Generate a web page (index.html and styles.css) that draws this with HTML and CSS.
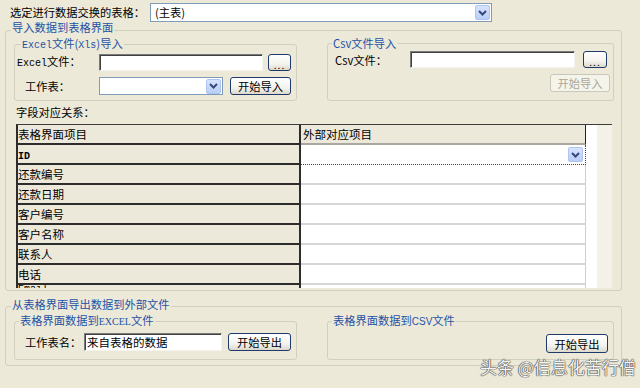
FILE: index.html
```html
<!DOCTYPE html>
<html lang="zh-CN">
<head>
<meta charset="utf-8">
<title>数据交换</title>
<link rel="stylesheet" href="styles.css">
</head>
<body>
<div class="top">
  <span class="toplbl">选定进行数据交换的表格：</span>
  <div class="combo topcombo"><span class="ctext">(主表)</span><span class="dd"><svg width="9" height="6" viewBox="0 0 9 6"><path d="M1 1 L4.5 4.5 L8 1" fill="none" stroke="#34497c" stroke-width="2"/></svg></span></div>
</div>

<fieldset class="grp outer imp">
  <legend>导入数据到表格界面</legend>
  <div class="subs">
    <fieldset class="grp sub iexcel">
      <legend class="lg6"><span class="mono">Excel</span>文件(<span class="mono">Xls</span>)导入</legend>
      <div class="r r1">
        <span class="lbl w82"><span class="mono">Excel</span>文件：</span>
        <div class="tb w164"></div>
        <button class="btn dots">...</button>
      </div>
      <div class="r r2">
        <span class="lbl w74">工作表：</span>
        <div class="combo w124"><span class="dd"><svg width="9" height="6" viewBox="0 0 9 6"><path d="M1 1 L4.5 4.5 L8 1" fill="none" stroke="#34497c" stroke-width="2"/></svg></span></div>
        <button class="btn w61">开始导入</button>
      </div>
    </fieldset>
    <fieldset class="grp sub icsv">
      <legend>Csv文件导入</legend>
      <div class="r c1r">
        <span class="lbl w75">Csv文件：</span>
        <div class="tb w165"></div>
        <button class="btn dots w24">...</button>
      </div>
      <div class="r c2r">
        <button class="btn w60" disabled>开始导入</button>
      </div>
    </fieldset>
  </div>
  <div class="fieldlbl">字段对应关系：</div>
  <div class="grid">
    <div class="tbl">
      <div class="k hd">表格界面项目</div><div class="v hd">外部对应项目</div>
      <div class="k"><b class="mono">ID</b></div><div class="v sel"><span class="dd"><svg width="9" height="6" viewBox="0 0 9 6"><path d="M1 1 L4.5 4.5 L8 1" fill="none" stroke="#34497c" stroke-width="2"/></svg></span></div>
      <div class="k">还款编号</div><div class="v"></div>
      <div class="k">还款日期</div><div class="v"></div>
      <div class="k">客户编号</div><div class="v"></div>
      <div class="k">客户名称</div><div class="v"></div>
      <div class="k">联系人</div><div class="v"></div>
      <div class="k">电话</div><div class="v"></div>
      <div class="k last"><span class="mono">Email</span></div><div class="v"></div>
    </div>
    <div class="fill"></div>
    <div class="sb"></div>
  </div>
</fieldset>

<fieldset class="grp outer exp">
  <legend>从表格界面导出数据到外部文件</legend>
  <div class="subs">
    <fieldset class="grp sub eexcel">
      <legend>表格界面数据到<span class="ser">EXCEL</span>文件</legend>
      <div class="r e1r">
        <span class="lbl w59">工作表名：</span>
        <div class="tb w138 tbtext">来自表格的数据</div>
        <button class="btn w63">开始导出</button>
      </div>
    </fieldset>
    <fieldset class="grp sub ecsv">
      <legend>表格界面数据到<span class="nar">CSV</span>文件</legend>
      <div class="r e2r">
        <button class="btn w62">开始导出</button>
      </div>
    </fieldset>
  </div>
</fieldset>

<div class="wm">头条 @信息化苦行僧</div>
</body>
</html>
```

FILE: styles.css
```css
* { box-sizing: border-box; }
body {
  margin: 0;
  width: 640px;
  height: 388px;
  background: #ECE9D8;
  font-family: "Noto Sans CJK SC", "Noto Sans", sans-serif;
  font-size: 11.25px;
  color: #000;
  position: relative;
  overflow: hidden;
}
.mono { font-family: "Liberation Mono", "Noto Sans CJK SC", monospace; font-size: 10px; }
.ser { font-family: "Liberation Serif", serif; font-size: 10px; }
.nar { font-family: "Liberation Sans Narrow", "Liberation Sans", sans-serif; font-size: 10px; }

.top { display: flex; align-items: center; height: 22px; padding: 3px 0 0 10px; }
.toplbl { width: 140px; line-height: 19px; }
.combo {
  display: flex; align-items: center; justify-content: space-between;
  background: #fff; border: 1px solid #7F9DB9; padding: 0 1px 0 0;
}
.topcombo { width: 342px; height: 19px; }
.ctext { padding-left: 4px; line-height: 17px; }
.dd {
  display: flex; align-items: center; justify-content: center;
  width: 15px; height: 15px; margin-left: auto;
  background: linear-gradient(#D8E4FD, #B9CDF8);
  border: 1px solid #B0C4F2; border-radius: 2px;
}

.grp { border: 1px solid #D0D0BF; border-radius: 3px; margin: 0; min-width: 0; }
.grp legend { color: #1F52A6; line-height: 16px; padding: 0 1px; }
.outer { width: 617px; margin-left: 5px; padding: 0 7px 0 8px; }
.outer > legend { margin-left: -3px; }
.imp { margin-top: -3px; padding-bottom: 2px; }
.imp > legend { padding-bottom: 6px; margin-bottom: -6px; }
.exp { margin-top: 5px; padding-bottom: 5px; }
.exp > legend { padding-bottom: 4px; margin-bottom: -4px; }

.subs { display: flex; gap: 30px; }
.sub { padding: 0; }
.sub > legend { margin-left: 4px; }
.sub > legend.lg6 { margin-left: 6px; }
.iexcel { width: 283px; padding-bottom: 5px; }
.icsv { width: 287px; padding-bottom: 5px; }
.eexcel { width: 283px; padding-bottom: 8px; }
.ecsv { width: 287px; }

.r { display: flex; align-items: center; }
.lbl { line-height: 14px; white-space: nowrap; }
.r1 { height: 17px; padding-left: 2px; }
.r2 { height: 18px; margin-top: 6px; padding-left: 10px; }
.c1r { height: 17px; padding-left: 7px; }
.c2r { height: 18px; margin-top: 6px; justify-content: flex-end; padding-right: 3px; }
.e1r { height: 18px; margin-top: 3px; padding-left: 10px; }
.e2r { height: 19px; margin-top: 4px; justify-content: flex-end; padding-right: 5px; }

.w82 { width: 82px; } .w74 { width: 74px; } .w75 { width: 75px; } .w59 { width: 59px; }
.w164 { width: 164px; } .w165 { width: 165px; } .w124 { width: 124px; } .w138 { width: 138px; }
.w61 { width: 61px; } .w60 { width: 60px; } .w62 { width: 62px; } .w63 { width: 63px; } .w24 { width: 24px !important; }

.tb {
  height: 17px; background: #fff;
  border: 1px solid; border-color: #7a7a7a #f4f3ee #f4f3ee #7a7a7a;
  box-shadow: inset 1px 1px 0 #404040;
}
.e1r .tb { height: 18px; }
.tbtext { padding-left: 2px; line-height: 16px; font-size: 11.5px; }
.r2 .combo { height: 18px; }

.btn {
  font-family: inherit; font-size: 11.25px; color: #000;
  height: 100%; padding: 0; margin-left: 6px;
  border: 1px solid #1D3A6A; border-radius: 3px;
  background: linear-gradient(#FFFFFF, #F4F3EE 60%, #DCD8CC);
  line-height: 14px;
}
.r1 .btn { margin-left: 5px; }
.r2 .btn { margin-left: 7px; }
.c1r .btn { margin-left: 8px; }
.dots { width: 23px; font-size: 10px; letter-spacing: 1px; padding-top: 3px; }
.btn:disabled { border-color: #C9C7BA; background: #F5F4EA; color: #ACA899; }
.c2r .btn, .e2r .btn { margin-left: 0; }

.fieldlbl { margin: 4px 0 0 2px; height: 19px; line-height: 14px; }

.grid {
  display: flex; width: 596px; height: 164px; margin-left: 2px;
  border-top: 1px solid #3c3c3c; background: #fff; overflow: hidden;
}
.tbl { display: grid; grid-template-columns: 285px 285px; grid-auto-rows: 20px; width: 570px; flex: none; }
.k {
  background: #ECE9DB;
  border-left: 2px solid #2c2c2c; border-right: 2px solid #2c2c2c; border-bottom: 2px solid #2c2c2c;
  line-height: 18px; font-size: 11.5px; white-space: nowrap;
}
.k.last { line-height: 4px; overflow: hidden; }
.v { border-bottom: 2px solid #D6D6D6; border-right: 1px solid #CFCFCF; font-size: 11.5px; line-height: 18px; }
.v.hd { background: #ECE9DB; border-right: 1px solid #222; border-bottom: 2px solid #A8A8A0; padding-left: 2px; }
.v.sel {
  display: flex; align-items: center; justify-content: flex-end; padding-right: 2px;
  border-bottom: 1px dotted #444; border-right: 1px dotted #444;
}
.fill { width: 11px; flex: none; }
.sb { width: 15px; flex: none; background: #F3F1E8; }

.wm {
  position: absolute; left: 480px; top: 357px;
  font-size: 17px; line-height: 20px; white-space: nowrap;
  color: #f4f4f4;
  text-shadow: 0 0 1px #333, 0 0 1px #333, 0 0 1px #444;
}
```
